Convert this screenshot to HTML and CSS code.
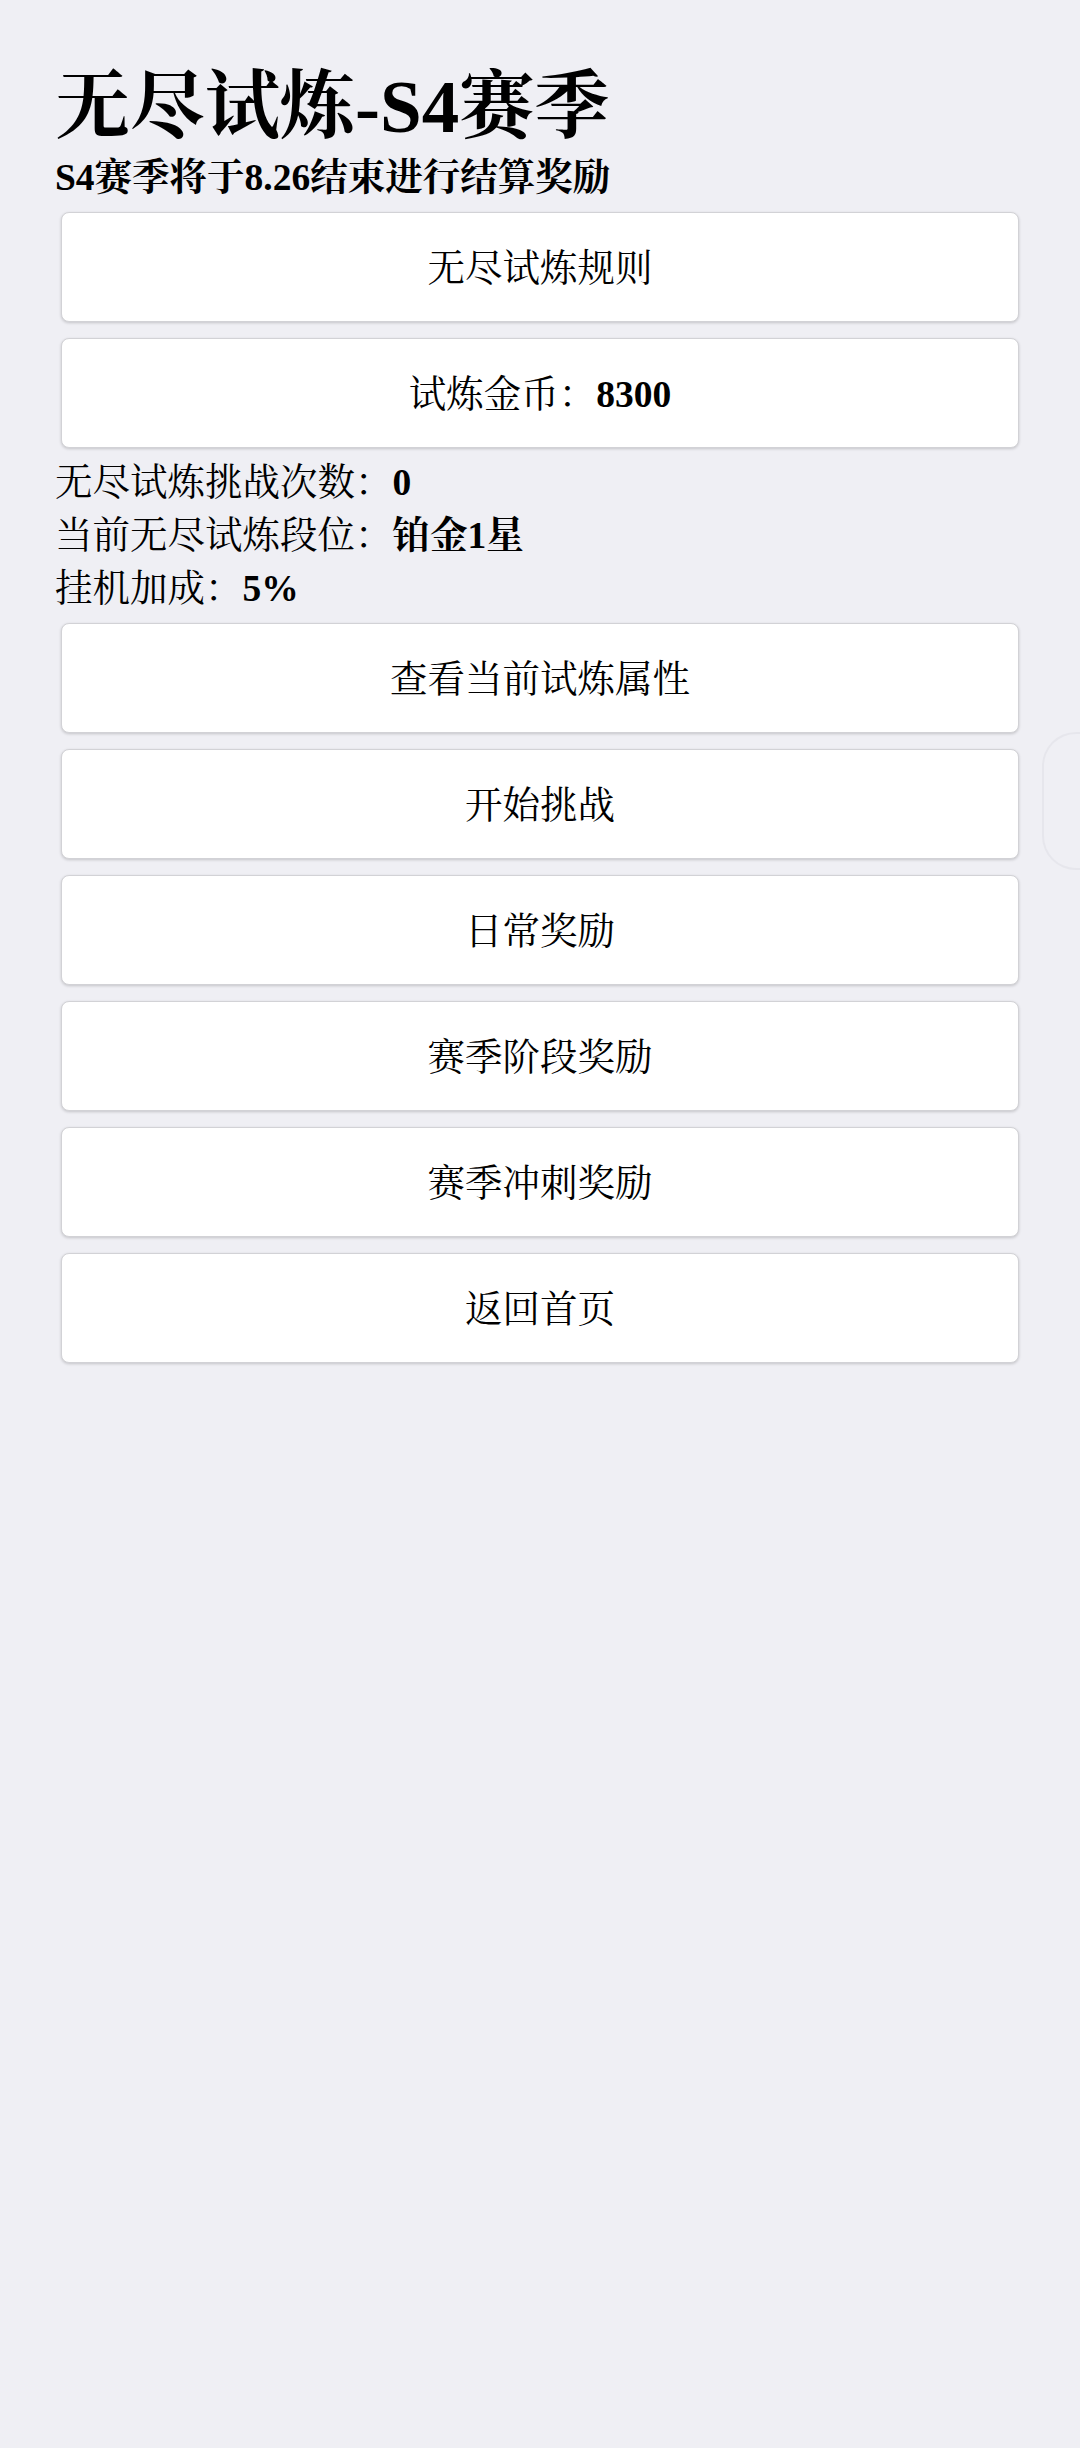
FILE: index.html
```html
<!DOCTYPE html>
<html lang="zh-CN">
<head>
<meta charset="utf-8">
<title>无尽试炼-S4赛季</title>
<link rel="stylesheet" href="styles.css">
</head>
<body>
<main class="page">
  <h1 class="title">无尽试炼-S4赛季</h1>
  <h4 class="subtitle">S4赛季将于8.26结束进行结算奖励</h4>
  <div class="stack">
    <button class="btn">无尽试炼规则</button>
    <button class="btn">试炼金币：<b>8300</b></button>
    <div class="info">
      <p class="line">无尽试炼挑战次数：<b>0</b></p>
      <p class="line">当前无尽试炼段位：<b>铂金1星</b></p>
      <p class="line">挂机加成：<b>5%</b></p>
    </div>
    <button class="btn">查看当前试炼属性</button>
    <button class="btn">开始挑战</button>
    <button class="btn">日常奖励</button>
    <button class="btn">赛季阶段奖励</button>
    <button class="btn">赛季冲刺奖励</button>
    <button class="btn">返回首页</button>
  </div>
</main>
<div class="edge-handle"></div>
</body>
</html>
```
FILE: styles.css
```css
html, body {
  margin: 0;
  padding: 0;
  background: #efeff4;
}
body {
  font-family: "Liberation Serif", "Noto Serif CJK SC", "Noto Sans CJK SC", serif;
  font-size: 37.5px;
  color: #000;
  min-height: 2448px;
  position: relative;
}
.page {
  padding: 62px 55px 0 55px;
}
.title {
  margin: 0;
  font-size: 75px;
  font-weight: bold;
  line-height: 90px;
}
.subtitle {
  margin: 0;
  font-size: 37.5px;
  font-weight: bold;
  line-height: 52px;
}
.stack {
  display: flex;
  flex-direction: column;
}
.btn {
  margin: 8px 6px;
  height: 110px;
  box-sizing: border-box;
  background: #fff;
  border: 1px solid #d2d2d6;
  border-radius: 8px;
  box-shadow: 0 1px 3px rgba(0, 0, 0, 0.18);
  font-family: inherit;
  font-size: 37.5px;
  font-weight: normal;
  color: #000;
  text-align: center;
  padding: 0 0 5px 0;
}
.btn b {
  font-weight: bold;
}
.info {
  margin: 0;
}
.line {
  margin: 0;
  line-height: 53px;
}
.line b {
  font-weight: bold;
}
.edge-handle {
  position: absolute;
  right: 0;
  top: 732px;
  width: 36px;
  height: 134px;
  border: 2px solid #e6e6ec;
  border-right: none;
  border-radius: 34px 0 0 34px;
}
```
